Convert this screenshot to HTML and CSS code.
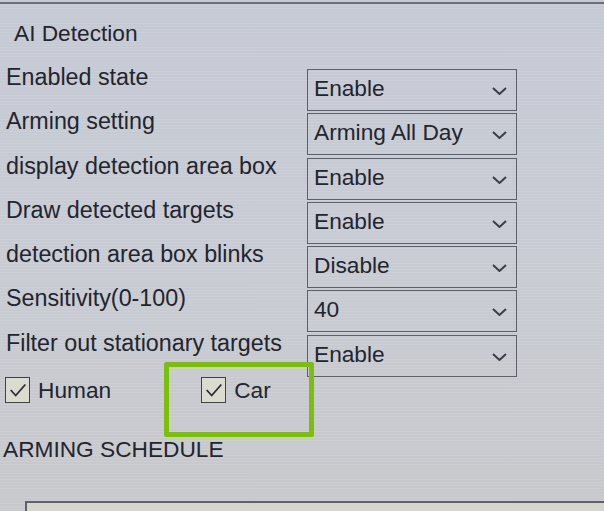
FILE: index.html
```html
<!DOCTYPE html>
<html>
<head>
<meta charset="utf-8">
<link rel="stylesheet" href="styles.css">
</head>
<body>
<div class="screen">
  <div class="topline"></div>
  <div class="title">AI Detection</div>
  <div class="form">
    <div class="row"><div class="label">Enabled state</div><div class="select"><span>Enable</span><svg class="chev" viewBox="0 0 15 8"><path d="M1 1 L7.5 7 L14 1"/></svg></div></div>
    <div class="row"><div class="label">Arming setting</div><div class="select"><span>Arming All Day</span><svg class="chev" viewBox="0 0 15 8"><path d="M1 1 L7.5 7 L14 1"/></svg></div></div>
    <div class="row"><div class="label">display detection area box</div><div class="select"><span>Enable</span><svg class="chev" viewBox="0 0 15 8"><path d="M1 1 L7.5 7 L14 1"/></svg></div></div>
    <div class="row"><div class="label">Draw detected targets</div><div class="select"><span>Enable</span><svg class="chev" viewBox="0 0 15 8"><path d="M1 1 L7.5 7 L14 1"/></svg></div></div>
    <div class="row"><div class="label">detection area box blinks</div><div class="select"><span>Disable</span><svg class="chev" viewBox="0 0 15 8"><path d="M1 1 L7.5 7 L14 1"/></svg></div></div>
    <div class="row"><div class="label">Sensitivity(0-100)</div><div class="select"><span>40</span><svg class="chev" viewBox="0 0 15 8"><path d="M1 1 L7.5 7 L14 1"/></svg></div></div>
    <div class="row"><div class="label">Filter out stationary targets</div><div class="select"><span>Enable</span><svg class="chev" viewBox="0 0 15 8"><path d="M1 1 L7.5 7 L14 1"/></svg></div></div>
  </div>
  <div class="checks">
    <label class="check human"><span class="box"><svg viewBox="0 0 24 24"><path d="M4 12 L9.5 18 L20 6"/></svg></span><span>Human</span></label>
    <label class="check car"><span class="box"><svg viewBox="0 0 24 24"><path d="M4 12 L9.5 18 L20 6"/></svg></span><span>Car</span><span class="highlight"></span></label>
  </div>
  <div class="section">ARMING SCHEDULE</div>
  <div class="schedule"></div>
</div>
</body>
</html>
```

FILE: styles.css
```css
html, body {
  margin: 0;
  padding: 0;
}
body {
  width: 604px;
  height: 511px;
  overflow: hidden;
  background: linear-gradient(180deg, #c5c9d3 0%, #c8cbd3 50%, #c7c8cb 100%);
  font-family: "Liberation Sans", Arial, sans-serif;
  color: #22252d;
}
.screen {
  position: relative;
  height: 511px;
  background-image: repeating-linear-gradient(180deg, rgba(255,255,255,0.10) 0px, rgba(255,255,255,0.10) 1px, rgba(0,0,0,0) 1px, rgba(0,0,0,0) 3px);
}
.topline {
  height: 2px;
  margin-top: 2px;
  background: #6a6e78;
}
.title {
  font-size: 22.7px;
  line-height: 26px;
  padding-left: 14px;
  margin-top: 16px;
  height: 26px;
}
.form {
  margin-top: 20px;
  display: flex;
  flex-direction: column;
}
.row {
  height: 44.3px;
  display: grid;
  grid-template-columns: 307px 210px;
}
.label {
  font-size: 23.3px;
  line-height: 22px;
  padding-left: 6px;
  white-space: nowrap;
}
.select {
  margin-top: 3px;
  height: 42px;
  box-sizing: border-box;
  border: 1.5px solid #5b606b;
  display: flex;
  align-items: flex-start;
  justify-content: space-between;
  padding: 5px 9px 0 6px;
  font-size: 22.7px;
  line-height: 26px;
}
.chev {
  width: 15px;
  height: 8px;
  margin-top: 12px;
  fill: none;
  stroke: #3a3e48;
  stroke-width: 2;
}
.checks {
  position: relative;
  display: flex;
  height: 28px;
}
.check {
  display: flex;
  align-items: center;
  gap: 8px;
  font-size: 22.7px;
  line-height: 26px;
}
.human {
  margin-left: 5px;
}
.car {
  position: relative;
  margin-left: 90px;
}
.box {
  width: 25px;
  height: 26px;
  box-sizing: border-box;
  border: 1.5px solid #3e424c;
  background: #dcdbd0;
  display: flex;
  align-items: center;
  justify-content: center;
}
.box svg {
  width: 22px;
  height: 22px;
  fill: none;
  stroke: #2c2f37;
  stroke-width: 2;
}
.highlight {
  position: absolute;
  left: -37px;
  top: -14px;
  width: 150px;
  height: 75px;
  box-sizing: border-box;
  border: 5px solid #7cbe0c;
  border-radius: 2px;
}
.section {
  font-size: 22.7px;
  line-height: 26px;
  padding-left: 3px;
  margin-top: 32px;
}
.schedule {
  margin-top: 39px;
  margin-left: 25px;
  height: 20px;
  border-top: 2px solid #5e626b;
  border-left: 2px solid #5e626b;
  background: #d6d6cf;
}
```
